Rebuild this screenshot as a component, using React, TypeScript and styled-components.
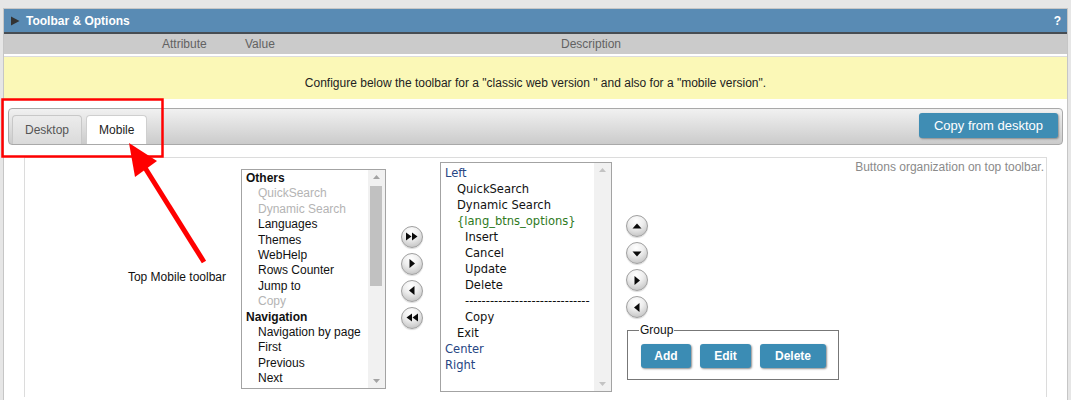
import styled, { createGlobalStyle, css } from "styled-components";

const GlobalStyle = createGlobalStyle`
  html, body {
    margin: 0;
    padding: 0;
    background: #e6e6e6;
    font-family: "Liberation Sans", Arial, sans-serif;
    font-size: 12px;
    color: #111;
  }
`;

const Page = styled.div`
  position: relative;
  width: 1071px;
  height: 400px;
  overflow: hidden;
  padding-top: 8px;
  box-sizing: border-box;
`;

const Panel = styled.section`
  margin: 0 3px;
  background: #fff;
  border: 1px solid #c6c6c6;
  border-bottom: none;
  height: 400px;
`;

const Header = styled.div`
  height: 23px;
  background: #598bb4;
  border-bottom: 2px solid #474d53;
  display: flex;
  align-items: center;
  padding: 0 6px 0 6px;
  color: #fff;
  font-weight: bold;
  font-size: 12px;
`;

const HeaderTitle = styled.span`
  flex: 1;
  margin-left: 6px;
`;

const ColumnHead = styled.div`
  display: grid;
  grid-template-columns: 158px 83px 316px auto;
  height: 20px;
  align-items: center;
  background: #cbcbcb;
  color: #626262;
  border-bottom: 2px solid #fff;
`;

const Notice = styled.div`
  background: #fbf8b7;
  border-top: 1px solid #dcdcdc;
  height: 43px;
  box-sizing: border-box;
  padding-top: 19px;
  text-align: center;
  color: #222;
`;

const Body = styled.div`
  padding: 9px 4px 0;
`;

const TabBar = styled.div`
  height: 37px;
  box-sizing: border-box;
  border: 1px solid #a9a9a9;
  border-radius: 4px;
  background: linear-gradient(#f1f1f1, #cbcbcb);
  display: flex;
  align-items: flex-end;
  padding: 0 4px 0 3px;
`;

const Tab = styled.div<{ $active?: boolean }>`
  height: 29px;
  box-sizing: border-box;
  padding: 0 12px;
  margin-right: 4px;
  display: flex;
  align-items: center;
  border: 1px solid #c8c8c8;
  border-bottom: none;
  border-radius: 4px 4px 0 0;
  color: #555;
  background: linear-gradient(#ececec, #dadada);
  ${(p) =>
    p.$active &&
    css`
      background: #fff;
      color: #222;
      border-color: #cfcfcf;
    `}
`;

const CopyButton = styled.button`
  margin: 0 0 3px auto;
  height: 25px;
  width: 139px;
  border: none;
  border-radius: 3px;
  background: #3f8db4;
  color: #fff;
  font-family: "Liberation Sans", Arial, sans-serif;
  font-size: 13px;
  box-shadow: 1px 1px 2px rgba(0, 0, 0, 0.35);
  align-self: center;
`;

const Box = styled.div`
  margin: 12px 16px 0 16px;
  border: 1px solid #dcdcdc;
  border-bottom: none;
  display: flex;
  align-items: center;
  padding: 4px 2px 5px 0;
`;

const Label = styled.div`
  width: 216px;
  padding-right: 15px;
  box-sizing: border-box;
  text-align: right;
`;

const ListBox = styled.div<{ $w: number; $h: number; $mt?: number }>`
  width: ${(p) => p.$w}px;
  height: ${(p) => p.$h}px;
  margin-top: ${(p) => p.$mt ?? 0}px;
  box-sizing: border-box;
  border: 1px solid #a3a3a3;
  background: #fff;
  display: flex;
  overflow: hidden;
`;

const ListBody = styled.div<{ $alt?: boolean }>`
  flex: 1;
  overflow: hidden;
  padding: 1px 0 0 4px;
  line-height: 15.4px;
  ${(p) =>
    p.$alt &&
    css`
      padding-top: 2px;
      line-height: 16px;
      font-family: "DejaVu Sans Condensed", "DejaVu Sans", sans-serif;
      font-stretch: condensed;
      font-size: 12.8px;
    `}
`;

const Item = styled.div<{ $indent?: number; $tone?: "head" | "off" | "blue" | "green" }>`
  white-space: nowrap;
  padding-left: ${(p) => p.$indent ?? 0}px;
  color: ${(p) =>
    p.$tone === "off"
      ? "#b4b4b4"
      : p.$tone === "blue"
      ? "#274684"
      : p.$tone === "green"
      ? "#2f7a1e"
      : "#111"};
  font-weight: ${(p) => (p.$tone === "head" ? "bold" : "normal")};
`;

const Scrollbar = styled.div`
  width: 17px;
  background: #f1f1f1;
  display: flex;
  flex-direction: column;
  align-items: center;
  justify-content: space-between;
  padding: 5px 0;
  box-sizing: border-box;
  position: relative;
`;

const Thumb = styled.div`
  position: absolute;
  top: 16px;
  left: 2px;
  width: 12px;
  height: 100px;
  background: #c1c1c1;
`;

const ArrowCol = styled.div<{ $ml: number }>`
  display: flex;
  flex-direction: column;
  gap: 5px;
  margin-left: ${(p) => p.$ml}px;
`;

const Controls = styled.div`
  align-self: flex-start;
  margin-top: 53px;
  margin-left: 14px;
  display: flex;
  flex-direction: column;
  align-items: flex-start;
`;

const Circle = styled.div`
  width: 22px;
  height: 22px;
  box-sizing: border-box;
  border-radius: 50%;
  border: 1px solid #a0a0a0;
  background: radial-gradient(circle at 45% 25%, #ffffff 0%, #eeeeee 40%, #b5b5b5 100%);
  box-shadow: 0 1px 1px rgba(0, 0, 0, 0.15);
  display: flex;
  align-items: center;
  justify-content: center;
`;

const Group = styled.fieldset`
  margin: 5px 0 0 1px;
  padding: 7px 11px 11px 13px;
  border: 1px solid #777;
  width: 212px;
  box-sizing: border-box;
  display: flex;
  gap: 9px;
`;

const Legend = styled.legend`
  padding: 0 1px;
  margin-left: -2px;
  color: #111;
`;

const BlueButton = styled.button<{ $w: number }>`
  width: ${(p) => p.$w}px;
  height: 24px;
  border: none;
  border-radius: 3px;
  background: #3b8cb4;
  color: #fff;
  font-family: "Liberation Sans", Arial, sans-serif;
  font-weight: bold;
  font-size: 12px;
  box-shadow: 1px 1px 2px rgba(0, 0, 0, 0.45);
`;

const Description = styled.div`
  flex: 1;
  align-self: flex-start;
  margin-top: -2px;
  text-align: right;
  color: #8a8a8a;
`;

const Overlay = styled.svg`
  position: absolute;
  left: 0;
  top: 0;
  pointer-events: none;
`;

type Dir = "up" | "down" | "left" | "right" | "rr" | "ll";

const Glyph = ({ dir }: { dir: Dir }) => {
  const shapes: Record<Dir, string[]> = {
    up: ["2.5,8.5 11.5,8.5 7,3.5"],
    down: ["2.5,4.5 11.5,4.5 7,9.5"],
    right: ["4.5,2 4.5,11 10,6.5"],
    left: ["9.5,2 9.5,11 4,6.5"],
    rr: ["1,2.5 1,10.5 6.5,6.5", "7,2.5 7,10.5 12.5,6.5"],
    ll: ["13,2.5 13,10.5 7.5,6.5", "7,2.5 7,10.5 1.5,6.5"],
  };
  return (
    <svg width="14" height="13" viewBox="0 0 14 13">
      {shapes[dir].map((p) => (
        <polygon key={p} points={p} fill="#0a0a0a" />
      ))}
    </svg>
  );
};

const Caret = () => (
  <svg width="10" height="10" viewBox="0 0 10 10">
    <polygon points="1,0.5 1,9.5 9.5,5" fill="#333" />
  </svg>
);

const ScrollArrow = ({ up, light }: { up?: boolean; light?: boolean }) => (
  <svg width="7" height="4" viewBox="0 0 7 4">
    <polygon points={up ? "0,4 7,4 3.5,0" : "0,0 7,0 3.5,4"} fill={light ? "#c3c3c3" : "#a3a3a3"} />
  </svg>
);

const leftItems: [string, number, "head" | "off" | undefined][] = [
  ["Others", 0, "head"],
  ["QuickSearch", 12, "off"],
  ["Dynamic Search", 12, "off"],
  ["Languages", 12, undefined],
  ["Themes", 12, undefined],
  ["WebHelp", 12, undefined],
  ["Rows Counter", 12, undefined],
  ["Jump to", 12, undefined],
  ["Copy", 12, "off"],
  ["Navigation", 0, "head"],
  ["Navigation by page", 12, undefined],
  ["First", 12, undefined],
  ["Previous", 12, undefined],
  ["Next", 12, undefined],
];

const rightItems: [string, number, "blue" | "green" | undefined][] = [
  ["Left", 0, "blue"],
  ["QuickSearch", 12, undefined],
  ["Dynamic Search", 12, undefined],
  ["{lang_btns_options}", 12, "green"],
  ["Insert", 20, undefined],
  ["Cancel", 20, undefined],
  ["Update", 20, undefined],
  ["Delete", 20, undefined],
  ["------------------------------", 20, undefined],
  ["Copy", 20, undefined],
  ["Exit", 12, undefined],
  ["Center", 0, "blue"],
  ["Right", 0, "blue"],
];

export default function App() {
  return (
    <Page>
      <GlobalStyle />
      <Panel>
        <Header>
          <Caret />
          <HeaderTitle>Toolbar &amp; Options</HeaderTitle>
          <span>?</span>
        </Header>
        <ColumnHead>
          <span />
          <span>Attribute</span>
          <span>Value</span>
          <span>Description</span>
        </ColumnHead>
        <Notice>
          Configure below the toolbar for a "classic web version " and also for a "mobile version".
        </Notice>
        <Body>
          <TabBar>
            <Tab>Desktop</Tab>
            <Tab $active>Mobile</Tab>
            <CopyButton>Copy from desktop</CopyButton>
          </TabBar>
          <Box>
            <Label>Top Mobile toolbar</Label>
            <ListBox $w={145} $h={220} $mt={4}>
              <ListBody>
                {leftItems.map(([t, i, tone]) => (
                  <Item key={t + i} $indent={i} $tone={tone}>
                    {t}
                  </Item>
                ))}
              </ListBody>
              <Scrollbar>
                <ScrollArrow up />
                <Thumb />
                <ScrollArrow />
              </Scrollbar>
            </ListBox>
            <ArrowCol $ml={15}>
              <Circle><Glyph dir="rr" /></Circle>
              <Circle><Glyph dir="right" /></Circle>
              <Circle><Glyph dir="left" /></Circle>
              <Circle><Glyph dir="ll" /></Circle>
            </ArrowCol>
            <ArrowCol $ml={17}>
              <ListBox $w={172} $h={230}>
                <ListBody $alt>
                  {rightItems.map(([t, i, tone]) => (
                    <Item key={t + i} $indent={i} $tone={tone}>
                      {t}
                    </Item>
                  ))}
                </ListBody>
                <Scrollbar>
                  <ScrollArrow up light />
                  <ScrollArrow light />
                </Scrollbar>
              </ListBox>
            </ArrowCol>
            <Controls>
              <ArrowCol $ml={0}>
                <Circle><Glyph dir="up" /></Circle>
                <Circle><Glyph dir="down" /></Circle>
                <Circle><Glyph dir="right" /></Circle>
                <Circle><Glyph dir="left" /></Circle>
              </ArrowCol>
              <Group>
                <Legend>Group</Legend>
                <BlueButton $w={50}>Add</BlueButton>
                <BlueButton $w={51}>Edit</BlueButton>
                <BlueButton $w={66}>Delete</BlueButton>
              </Group>
            </Controls>
            <Description>Buttons organization on top toolbar.</Description>
          </Box>
        </Body>
      </Panel>
      <Overlay width="1071" height="400" viewBox="0 0 1071 400">
        <rect x="2.5" y="99.5" width="160" height="57" fill="none" stroke="#f00" strokeWidth="2.5" />
        <line x1="204" y1="262" x2="142" y2="163" stroke="#f00" strokeWidth="5" />
        <polygon points="129,143 157,161 135,177" fill="#f00" />
      </Overlay>
    </Page>
  );
}
